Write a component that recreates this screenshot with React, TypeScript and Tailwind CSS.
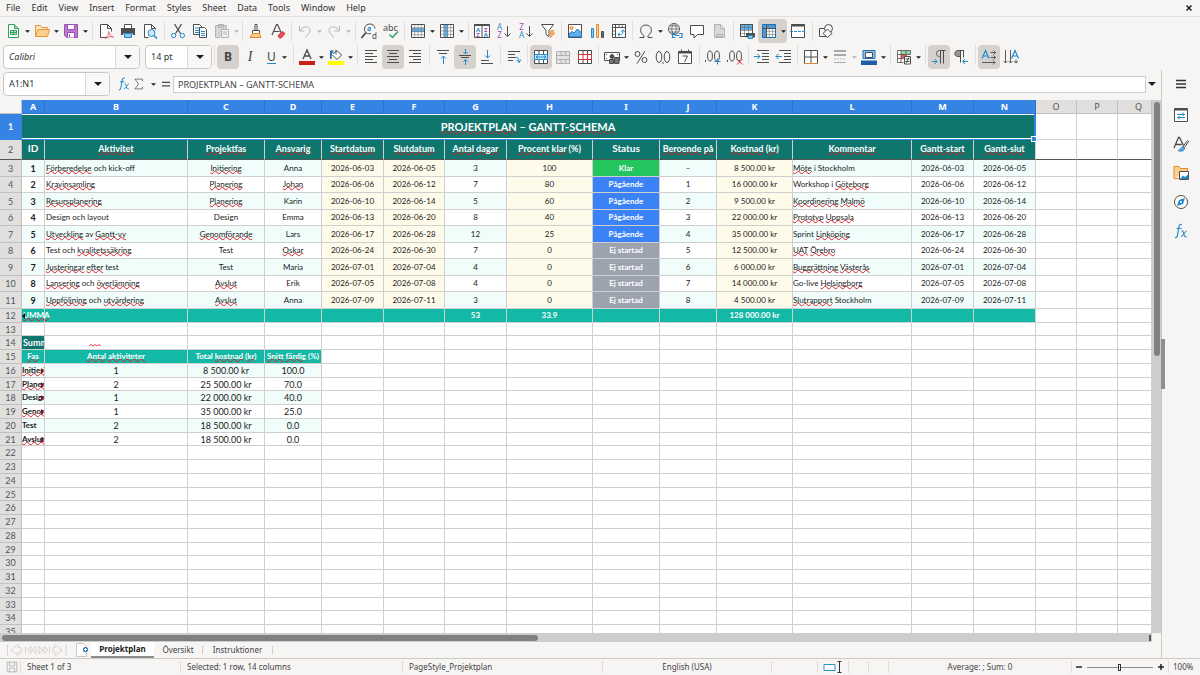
import type { ReactNode } from 'react';
import clsx from 'clsx';

const menus = ['File', 'Edit', 'View', 'Insert', 'Format', 'Styles', 'Sheet', 'Data', 'Tools', 'Window', 'Help'];

const Icon = ({ children, className }: { children: ReactNode; className?: string }) => (
  <svg viewBox="0 0 16 16" fill="none" stroke="#4d4d4d" className={clsx('shrink-0 overflow-visible', className ?? 'size-4')} aria-hidden="true">
    {children}
  </svg>
);

const Caret = ({ disabled, large }: { disabled?: boolean; large?: boolean }) => (
  <svg viewBox="0 0 8 4" fill={disabled ? '#b5b5b5' : '#1d1d1d'} className={large ? 'w-2 h-1' : 'w-[5px] h-[3px]'} aria-hidden="true">
    <path d="M0 0h8L4 4z" />
  </svg>
);

const icons: Record<string, ReactNode> = {
  new: (
    <>
      <path d="M3.5 1.5h6l4 4v9h-10z" stroke="#2fa35a" fill="#fff" />
      <path d="M9.5 1.5v4h4" stroke="#2fa35a" fill="#8fd6a6" />
      <path d="M5.5 7.5h6v4h-6z M5.5 9.5h6M8.5 7.5v4" stroke="#2fa35a" fill="#bfe8cb" />
    </>
  ),
  open: (
    <>
      <path d="M1.5 13.5v-11h5l1.500 2h5.500v3" stroke="#e8973c" fill="#fce3bd" />
      <path d="M1.500 13.500l2.500-7h11.500l-2 7z" stroke="#e8973c" fill="#fbd08e" />
    </>
  ),
  save: (
    <>
      <path d="M1.500 1.500h13v13h-11l-2-2z" stroke="#9b4fb0" fill="#b97acb" />
      <path d="M4.500 1.500h7v5h-7z" stroke="#9b4fb0" fill="#fff" />
      <path d="M4.500 14.500v-5h7v5" stroke="#9b4fb0" fill="#fff" />
      <path d="M6.500 11v3" stroke="#9b4fb0" />
    </>
  ),
  pdf: (
    <>
      <path d="M9.500 14.500h-7v-13h7l4 4v3M9.500 1.500v4h4" fill="#fff" />
      <path d="M7 15.500c2.500-2 4-4.500 3.700-7 .5 3 2.300 5 4.800 5.500-3-.6-5.500-.3-8.500 1.500" stroke="#e0526c" strokeWidth=".9" />
    </>
  ),
  print: (
    <>
      <path d="M4.500 5v-3.500h7v3.500" fill="#fff" />
      <path d="M1 5h14v6.500h-2v-2h-10v2h-2z" fill="#4d4d4d" stroke="none" />
      <path d="M1 11.500h2v-2h10v2h2" />
      <path d="M4.500 10.500h7v4h-7z" stroke="#1e8bcd" fill="#8ec5ee" />
    </>
  ),
  preview: (
    <>
      <path d="M6.500 14.500h-4v-13h7l4 4v1M9.500 1.500v4h4" fill="#fff" />
      <circle cx="9.500" cy="10" r="3.500" stroke="#1e8bcd" fill="#cfe6f7" />
      <path d="M12 12.500l3 3" stroke="#1e8bcd" strokeWidth="1.500" />
    </>
  ),
  cut: (
    <>
      <path d="M4.500 1l6 9.500M11.500 1l-6 9.500" strokeWidth="1.300" />
      <circle cx="3.700" cy="12.500" r="2.200" stroke="#1e8bcd" />
      <circle cx="12.300" cy="12.500" r="2.200" stroke="#1e8bcd" />
    </>
  ),
  copy: (
    <>
      <path d="M1.500 1.500h6l2 2v8h-8z" fill="#fff" />
      <path d="M3 5h5M3 7.500h4M3 9.500h4" stroke="#1e8bcd" />
      <path d="M7.500 4.500h5l2 2v8h-7z" fill="#fff" />
      <path d="M9 8.500h4M9 10.500h4M9 12.500h4" stroke="#1e8bcd" />
    </>
  ),
  paste: (
    <>
      <path d="M6 14.500h-4.500v-12h11v3M4.500 1.500h5v3h-5z" stroke="#b3b3b3" fill="#d6d6d6" />
      <path d="M7.500 6.500h7v8h-7zM9 9h4M9 11h4" stroke="#b3b3b3" fill="#f2f2f2" />
    </>
  ),
  clone: (
    <>
      <path d="M7 7v-5.500h2v5.500M4.500 7.500h7v3h-7z" fill="#fff" />
      <path d="M4.500 10.500h7l1.500 4h-11z" stroke="#e8872f" fill="#fbd08e" />
    </>
  ),
  clear: (
    <>
      <path d="M2 12l4.500-10.500h1l4 9M3.500 8.500h6" strokeWidth="1.200" />
      <path d="M8 12.500l4.500-4 2.500 2-4 4.500h-1.500z" stroke="#d9303e" fill="#e8505b" />
    </>
  ),
  undo: <path d="M2.500 3v5h5M3 7.500c3-5 10-4.500 10-.5 0 3-2.500 5-5 7.500" stroke="#b5b5b5" />,
  redo: <path d="M13.500 3v5h-5M13 7.500c-3-5-10-4.500-10-.5 0 3 2.500 5 5 7.500" stroke="#b5b5b5" />,
  find: (
    <>
      <path d="M10 10.500c-3.500 1-6.500-1-6.500-4.500s3-5 5.500-5 5 2 5 4.500" />
      <path d="M5 9.500l-4.500 5.500" strokeWidth="1.800" />
      <text x="6" y="8" fontSize="7" fontWeight="700" fill="#1e8bcd" stroke="none">a</text>
      <text x="11" y="15.500" fontSize="8" fill="#4d4d4d" stroke="none">d</text>
    </>
  ),
  spell: (
    <>
      <text x="0" y="7.500" fontSize="9" fill="#4d4d4d" stroke="none">abc</text>
      <path d="M6.500 11.500l3 3 5.500-6" stroke="#2fa35a" strokeWidth="1.400" />
    </>
  ),
  row: (
    <>
      <path d="M1.500 1.500h13v13h-13z" fill="#fff" stroke="none" />
      <path d="M1.500 5h13v4h-13z" fill="#63b1ea" stroke="none" />
      <path d="M4.700 1.500v13M8 1.500v13M11.300 1.500v13M1.500 4.700h13M1.500 8.700h13M1.500 11.700h13" stroke="#777" strokeWidth=".6" />
      <path d="M1.500 1.500h13v13h-13z" />
    </>
  ),
  col: (
    <>
      <path d="M1.500 1.500h13v13h-13z" fill="#fff" stroke="none" />
      <path d="M5 1.500h4v13h-4z" fill="#63b1ea" stroke="none" />
      <path d="M4.700 1.500v13M8.700 1.500v13M11.700 1.500v13M1.500 4.700h13M1.500 8h13M1.500 11.300h13" stroke="#777" strokeWidth=".6" />
      <path d="M1.500 1.500h13v13h-13z" />
    </>
  ),
  sort: (
    <>
      <path d="M.5 1.500h15v13h-15zM8 3v11" fill="#fff" />
      <path d="M.5 2h15" strokeWidth="2" />
      <g fontSize="6" fontWeight="700" stroke="none">
        <text x="2" y="8.500" fill="#1e8bcd">A</text>
        <text x="2.200" y="14" fill="#a44cb8">Z</text>
        <text x="10" y="8.500" fill="#a44cb8">Z</text>
        <text x="9.700" y="14" fill="#1e8bcd">A</text>
      </g>
    </>
  ),
  asc: (
    <>
      <text x="1" y="7" fontSize="8" fill="#1e8bcd" stroke="none">A</text>
      <text x="1.300" y="15" fontSize="8" fill="#a44cb8" stroke="none">Z</text>
      <path d="M11.500 3v10M8.500 10.500l3 3 3-3" />
    </>
  ),
  desc: (
    <>
      <text x="1.300" y="7" fontSize="8" fill="#a44cb8" stroke="none">Z</text>
      <text x="1" y="15" fontSize="8" fill="#1e8bcd" stroke="none">A</text>
      <path d="M11.500 3v10M8.500 10.500l3 3 3-3" />
    </>
  ),
  filter: (
    <>
      <path d="M1.500 1.500h12l-4.500 6v6l-3-2v-4z" fill="#fff" />
      <path d="M11 7.500h3l-1 2.500h2l-5 5 1.200-4h-1.700z" stroke="#e8872f" fill="#fbb45c" strokeWidth=".6" />
    </>
  ),
  image: (
    <>
      <path d="M1.500 1.500h13v13h-13z" fill="#fff" />
      <circle cx="4.500" cy="5" r="1.500" stroke="#e8872f" fill="#fbd08e" />
      <path d="M2 14v-3l3-2.500 2 1.500 3.500-4 4 4v4z" fill="#63b1ea" stroke="#1e6fb5" />
    </>
  ),
  chart: (
    <>
      <path d="M2.500 5.500h2v9h-2z" stroke="#1e8bcd" fill="#8ec5ee" />
      <path d="M7.500 1.500h2v13h-2z" stroke="#e8872f" fill="#fbd08e" />
      <path d="M12.500 8.500h2v6h-2z" fill="#6b6b6b" />
    </>
  ),
  pivot: (
    <>
      <path d="M1.500 1.500h13v13h-13z" fill="#fff" />
      <path d="M1.500 4.500h13M4.500 1.500v13" />
      <path d="M8 1.500v3M11.300 1.500v3M1.500 8h3M1.500 11.300h3" strokeWidth=".7" />
      <path d="M7 11.500h2.500c2 0 2.500-1.500 2.500-4.500M10.300 8.700l1.700-1.900 1.700 1.900M8.700 9.800l-1.900 1.700 1.900 1.700" stroke="#1e8bcd" />
    </>
  ),
  omega: <path d="M1.500 14.500h4.500v-2c-5-2.500-4.500-10.500 2-10.500s7 8 2 10.500v2h4.500" />,
  link: (
    <>
      <circle cx="7" cy="6" r="5.500" strokeWidth=".9" />
      <path d="M1.500 6h11M7 .5c-3 3-3 8 0 11M7 .5c3 3 3 8 0 11M2.500 3h9M2.500 9h9" strokeWidth=".7" />
      <path d="M8.500 10.500h-3v4h3M12 10.500h3v4h-3M8 12.500h4.500" stroke="#1e8bcd" strokeWidth="1.200" />
    </>
  ),
  comment: <path d="M1.500 2.500h13v9h-6l-3.500 3.500v-3.500h-3.500z" fill="#fff" />,
  headfoot: (
    <path d="M3.500 1.500h6l4 4v9h-10zM9.500 1.500v4h4M5.500 11.500h6v2h-6z" stroke="#b3b3b3" fill="#d9d9d9" />
  ),
  printarea: (
    <>
      <path d="M1.500 1.500h12v12h-12z" fill="#fff" />
      <path d="M1.500 1.500h12v5.500h-12z" fill="#63b1ea" stroke="none" />
      <path d="M1.500 4.500h12M1.500 7.500h12M1.500 10.500h12M5.500 1.500v12M9.500 1.500v12" strokeWidth=".6" stroke="#666" />
      <path d="M1.500 1.500h12v12h-12z" />
      <path d="M7.500 10.500h8v3.500h-8z" fill="#4d4d4d" />
      <path d="M9.500 12.500h4v3h-4z" fill="#8ec5ee" stroke="#1e8bcd" />
    </>
  ),
  freeze: (
    <>
      <path d="M1.500 1.500h13v13h-13z" fill="#fff" />
      <path d="M1 1h14v4h-10v10h-4z" fill="#4aa0e0" stroke="none" />
      <path d="M8.300 5v9.500M11.500 5v9.500M5 8.300h9.500M5 11.500h9.500M3.300 5v9.500M5 3.300h9.500" stroke="#777" strokeWidth=".6" />
      <path d="M1.500 1.500h13v13h-13z" stroke="#1e6fb5" />
      <path d="M5.500 1.500v13M1.500 5.500h13" />
    </>
  ),
  split: (
    <>
      <path d="M1.500 1.500h13v13h-13z" fill="#fff" />
      <path d="M1.500 2.500h13" strokeWidth="2" />
      <path d="M0 8.500h16" stroke="#1e8bcd" strokeDasharray="3 1" />
    </>
  ),
  shapes: (
    <>
      <path d="M1.500 5.500h7v8h-7z" />
      <circle cx="10.500" cy="5.500" r="4" fill="#f6f5f4" />
      <path d="M9.500 6l4.500 4.500-4.500 4-4.500-4z" fill="#f6f5f4" />
    </>
  ),
  fontcolor: (
    <>
      <path d="M4 10l4-9 4 9M5.500 7h5" strokeWidth="1.400" />
      <path d="M0 12h16v4h-16z" fill="#c9211e" stroke="none" />
    </>
  ),
  highlight: (
    <>
      <path d="M5 5l4-3.500 4.500 4.500-4.500 4.500-4.500-4.500M8 1v4.500" fill="#fff" />
      <path d="M2 1.500h4l-2 3-.5 5.500h-1.500z" fill="#1e6fb5" stroke="none" />
      <path d="M0 12h16v4h-16z" fill="#ffff00" stroke="none" />
    </>
  ),
  left: <path d="M2 1.500h12M2 4.500h8M2 7.500h12M2 10.500h8M2 13.500h12" />,
  center: <path d="M2 1.500h12M4 4.500h8M2 7.500h12M4 10.500h8M2 13.500h12" />,
  right: <path d="M2 1.500h12M6 4.500h8M2 7.500h12M6 10.500h8M2 13.500h12" />,
  top: (
    <>
      <path d="M2 1.500h12M4 4.500h8" />
      <path d="M8.500 15v-8M6 9.500l2.500-2.500 2.500 2.500" stroke="#1e8bcd" />
    </>
  ),
  middle: (
    <>
      <path d="M2 6.500h12M4 8.500h8" />
      <path d="M8.500 0v5M6.500 3l2 2 2-2M8.500 16v-5.500M6.500 12.500l2-2 2 2" stroke="#1e8bcd" />
    </>
  ),
  bottom: (
    <>
      <path d="M2 11.500h8M2 14.500h12" />
      <path d="M8.500 1v8M6 6.500l2.500 2.500 2.500-2.500" stroke="#1e8bcd" />
    </>
  ),
  wrap: (
    <>
      <path d="M2 2.500h12M2 5.500h7M2 8.500h7M2 11.500h5" />
      <path d="M9 8.500c3-.5 4 1 4 5M10.500 11l2.500 2.500 2-3" stroke="#1e8bcd" />
    </>
  ),
  merge: (
    <>
      <path d="M1.500 1.500h13v13h-13z" fill="#fff" />
      <path d="M6 1.500v4M10.500 1.500v4M6 10.500v4M10.500 10.500v4" />
      <path d="M1.500 5.500h13v5h-13z" stroke="#1e8bcd" fill="#cfe6f7" />
      <path d="M3 8h10M5 6.500l-2 1.500 2 1.500M11 6.500l2 1.500-2 1.500" stroke="#1e8bcd" />
    </>
  ),
  mergecells: <path d="M1.500 2.500h13v12h-13zM1.500 6.500h13M1.500 10.500h13M6 2.500v4M10.500 2.500v4M6 10.500v4M10.500 10.500v4" stroke="#b0b0b0" fill="#e4e4e4" />,
  unmerge: (
    <>
      <path d="M1.500 1.500h13v13h-13z" fill="#fff" />
      <path d="M6 1.500v4M10.500 1.500v4M6 10.500v4M10.500 10.500v4" />
      <path d="M1.500 5.500h13v5h-13zM6 5.500v5M10.500 5.500v5" stroke="#d9303e" />
    </>
  ),
  currency: (
    <>
      <path d="M.5 3.500h15v8h-15z" fill="#fff" />
      <circle cx="8" cy="7.500" r="2" fill="#4d4d4d" />
      <path d="M2 5.500h1M13 5.500h1M2 9.500h1" />
      <path d="M5.500 10.500h4v4h-4zM10.500 8.500h4.500v6h-4.500z" fill="#777" />
    </>
  ),
  percent: (
    <>
      <circle cx="4.500" cy="5" r="2.500" />
      <circle cx="11.500" cy="11" r="2.500" />
      <path d="M12 2l-8 12.500" />
    </>
  ),
  number: (
    <>
      <ellipse cx="4" cy="8" rx="2.800" ry="5.500" />
      <ellipse cx="12" cy="8" rx="2.800" ry="5.500" />
      <path d="M8 13v2" />
    </>
  ),
  date: (
    <>
      <path d="M1.500 2.500h13v12h-13z" fill="#fff" />
      <path d="M4.500 .5v3M11.500 .5v3" />
      <path d="M1.500 3.500h13" strokeWidth="2" />
      <path d="M5.500 7h5l-3 6" />
    </>
  ),
  adddec: (
    <>
      <ellipse cx="5" cy="7" rx="2.400" ry="5" />
      <ellipse cx="12" cy="7" rx="2.400" ry="5" />
      <path d="M.5 11v2" />
      <path d="M12.500 9.500v6M9.500 12.500h6" stroke="#1e8bcd" />
    </>
  ),
  deldec: (
    <>
      <ellipse cx="5" cy="7" rx="2.400" ry="5" />
      <ellipse cx="12" cy="7" rx="2.400" ry="5" />
      <path d="M.5 11v2" />
      <path d="M10 10l5.500 5.500M15.500 10l-5.500 5.500" stroke="#d9303e" />
    </>
  ),
  indent: (
    <>
      <path d="M3 1.500h12M8 4.500h7M8 7.500h7M8 10.500h7M3 13.500h12" />
      <path d="M0 7.500h6M3.500 5l2.500 2.500-2.500 2.500" stroke="#1e8bcd" />
    </>
  ),
  outdent: (
    <>
      <path d="M3 1.500h12M8 4.500h7M8 7.500h7M8 10.500h7M3 13.500h12" />
      <path d="M0 7.500h6M2.500 5l-2.500 2.500 2.500 2.500" stroke="#1e8bcd" />
    </>
  ),
  borders: (
    <>
      <path d="M1.500 1.500h13v13h-13z" fill="#fff" />
      <path d="M1.500 14.500h13" stroke="#e8872f" />
      <path d="M8 2v12M2 8h12" />
    </>
  ),
  borderstyle: (
    <>
      <path d="M2 2h12M2 6h12" stroke="#a8a8a8" strokeWidth="2" />
      <path d="M2 10h12" stroke="#b5b5b5" strokeDasharray="2 1" />
      <path d="M2 13.500h12" stroke="#a8a8a8" />
    </>
  ),
  bordercolor: (
    <>
      <path d="M2 1.500h12v8h-12z" stroke="#1e6fb5" fill="#8ec5ee" />
      <path d="M4.500 3.500h7v5h-7z" stroke="#4d4d4d" fill="#fff" />
      <path d="M0 11.500h16v4.500h-16z" fill="#1e5fa8" stroke="none" />
    </>
  ),
  cond: (
    <>
      <path d="M1.500 1.500h13v12h-13z" fill="#fff" stroke="none" />
      <path d="M5 1.500h9v4h-9z" fill="#8fd6a6" stroke="none" />
      <path d="M5 5.500h6v4h-6z" fill="#e8505b" stroke="none" />
      <path d="M1.500 1.500h13v4h-13zM1.500 5.500v8h6M1.500 9.500h6M5 1.500v12M10 1.500v4" strokeWidth=".8" />
      <path d="M8.500 7.500h6v7.500h-6z" fill="#fff" />
      <path d="M9.500 10h4M9.500 12.500h4M13 8.500l-3 5.500" />
    </>
  ),
  ltr: (
    <>
      <path d="M14.500 1.500h-6c-4 0-4 6 0 6M9.500 1.500v13M12.500 1.500v13" />
      <path d="M1 12.500h5M3.500 10l2.500 2.500-2.500 2.500" stroke="#1e8bcd" />
    </>
  ),
  rtl: (
    <>
      <path d="M7.500 1.500h-2c-5 0-5 6 0 6h2z" fill="#999" />
      <path d="M11 1.500h-5M7.500 1.500v12M10.500 1.500v7" />
      <path d="M10 12.500h5M12 10l-2.500 2.500 2.500 2.500" stroke="#1e8bcd" />
    </>
  ),
  textlr: (
    <>
      <path d="M1 9.500l3.500-8 3.500 8M2.300 7h4.500" stroke="#1e8bcd" strokeWidth="1.200" />
      <path d="M9.500 3.500h5M12.500 1.500l2 2-2 2M9.500 8.500h5M12.500 6.500l2 2-2 2M1 13.500h13M12 11.500l2 2-2 2" strokeWidth=".9" />
    </>
  ),
  texttb: (
    <>
      <path d="M8.500 9.500l3.500-8 3.500 8M9.800 7h4.500" stroke="#1e8bcd" strokeWidth="1.200" />
      <path d="M2.500 1v13M.5 12l2 2 2-2M7.500 1v13M5.500 12l2 2 2-2M13 10.500v3.500M11 12l2 2 2-2" strokeWidth=".9" />
    </>
  ),
  props: (
    <>
      <path d="M1.500 1.500h13v13h-13z" fill="#fff" />
      <path d="M1.500 2.500h13" strokeWidth="2" />
      <path d="M4 7.500h8M10 5.500v3.500M4 10.500h8M6 9v3.500" stroke="#1e8bcd" />
    </>
  ),
  styles: (
    <>
      <path d="M1 12l4.500-10.500h1l4 8M2.800 8.500h6" strokeWidth="1.300" />
      <path d="M10 10.500l4.500-6 1 1-4 6z" fill="#fff" />
      <path d="M5 14.500c3 0 2-3 4.500-3.500l2 1.500c-.5 3-4 3-6.500 2z" stroke="#1e8bcd" fill="#63b1ea" />
    </>
  ),
  gallery: (
    <>
      <path d="M1 13.500v-12h5l1.500 2h7v3M1 13.500h5" stroke="#e8872f" fill="#fbd08e" />
      <path d="M6.500 6.500h9v8h-9z" fill="#fff" />
      <path d="M7 14l3-3.500 2 1.500 3-2.500v4.500z" fill="#1e8bcd" stroke="none" />
    </>
  ),
  navigator: (
    <>
      <circle cx="8" cy="8" r="6.500" fill="#fff" />
      <path d="M12 4l-2 6-6 2 2-6z" fill="#1e8bcd" stroke="none" />
      <circle cx="8" cy="8" r="1" fill="#fff" stroke="none" />
    </>
  ),
  fx: (
    <>
      <path d="M9 1.500c-2-.8-2.800.3-3.200 3l-1.300 7.500c-.3 2-1 3-2.500 2.500M3.500 5.500h5" stroke="#1e8bcd" strokeWidth="1.200" />
      <path d="M8.500 8c1.500-.5 1.800.8 2.300 3s1.500 3 2.700 2.500M13.500 8c-1.500 0-3.500 5.500-5.500 5.500" stroke="#1e8bcd" strokeWidth="1.100" />
    </>
  ),
  sigma: <path d="M12.500 4v-2.500h-10l5 6.500-5 6.500h10v-2.500" />,
  equals: <path d="M1.500 5.500h13M1.500 11h13" strokeWidth="2" />,
};

type ToolItem = {
  icon: string;
  label: string;
  menu?: boolean;
  active?: boolean;
  disabled?: boolean;
} | 'sep' | 'wide';

const standardBar: ToolItem[] = [
  { icon: 'new', label: 'New', menu: true },
  { icon: 'open', label: 'Open', menu: true },
  { icon: 'save', label: 'Save', menu: true },
  'wide',
  { icon: 'pdf', label: 'Export as PDF' },
  { icon: 'print', label: 'Print' },
  { icon: 'preview', label: 'Print preview' },
  'wide',
  { icon: 'cut', label: 'Cut' },
  { icon: 'copy', label: 'Copy' },
  { icon: 'paste', label: 'Paste', menu: true, disabled: true },
  'sep',
  { icon: 'clone', label: 'Clone formatting' },
  { icon: 'clear', label: 'Clear formatting' },
  'sep',
  { icon: 'undo', label: 'Undo', menu: true, disabled: true },
  { icon: 'redo', label: 'Redo', menu: true, disabled: true },
  'wide',
  { icon: 'find', label: 'Find and replace' },
  { icon: 'spell', label: 'Spelling' },
  'sep',
  { icon: 'row', label: 'Row', menu: true },
  { icon: 'col', label: 'Column', menu: true },
  'wide',
  { icon: 'sort', label: 'Sort' },
  { icon: 'asc', label: 'Sort ascending' },
  { icon: 'desc', label: 'Sort descending' },
  { icon: 'filter', label: 'AutoFilter' },
  'sep',
  { icon: 'image', label: 'Insert image' },
  { icon: 'chart', label: 'Insert chart' },
  { icon: 'pivot', label: 'Pivot table' },
  'sep',
  { icon: 'omega', label: 'Special character', menu: true },
  { icon: 'link', label: 'Hyperlink' },
  { icon: 'comment', label: 'Comment' },
  { icon: 'headfoot', label: 'Headers and footers', disabled: true },
  'wide',
  { icon: 'printarea', label: 'Print area' },
  { icon: 'freeze', label: 'Freeze panes', menu: true, active: true },
  { icon: 'split', label: 'Split window' },
  'wide',
  { icon: 'shapes', label: 'Draw functions' },
];

const formattingBar: ToolItem[] = [
  { icon: 'fontcolor', label: 'Font color', menu: true },
  { icon: 'highlight', label: 'Highlighting', menu: true },
  'wide',
  { icon: 'left', label: 'Align left' },
  { icon: 'center', label: 'Center', active: true },
  { icon: 'right', label: 'Align right' },
  'wide',
  { icon: 'top', label: 'Align top' },
  { icon: 'middle', label: 'Center vertically', active: true },
  { icon: 'bottom', label: 'Align bottom' },
  'sep',
  { icon: 'wrap', label: 'Wrap text' },
  'sep',
  { icon: 'merge', label: 'Merge and center', active: true },
  { icon: 'mergecells', label: 'Merge cells', disabled: true },
  { icon: 'unmerge', label: 'Unmerge cells' },
  'sep',
  { icon: 'currency', label: 'Currency', menu: true },
  { icon: 'percent', label: 'Percent' },
  { icon: 'number', label: 'Number' },
  { icon: 'date', label: 'Date' },
  'wide',
  { icon: 'adddec', label: 'Add decimal place' },
  { icon: 'deldec', label: 'Delete decimal place' },
  'sep',
  { icon: 'indent', label: 'Increase indent' },
  { icon: 'outdent', label: 'Decrease indent' },
  'sep',
  { icon: 'borders', label: 'Borders', menu: true },
  { icon: 'borderstyle', label: 'Border style', menu: true, disabled: true },
  { icon: 'bordercolor', label: 'Border color', menu: true },
  'wide',
  { icon: 'cond', label: 'Conditional formatting', menu: true },
  'wide',
  { icon: 'ltr', label: 'Left-to-right', active: true },
  { icon: 'rtl', label: 'Right-to-left' },
  'wide',
  { icon: 'textlr', label: 'Text left to right', active: true },
  { icon: 'texttb', label: 'Text top to bottom' },
];

const Tools = ({ items }: { items: ToolItem[] }) => (
  <>
    {items.map((it, i) =>
      typeof it === 'string' ? (
        <span key={i} className={clsx('flex h-5 shrink-0 justify-center', it === 'wide' ? 'w-1.5' : 'w-[5px]')}>
          <span className="w-px bg-[#e3e1df]" />
        </span>
      ) : (
        <button
          key={i}
          type="button"
          aria-label={it.label}
          disabled={it.disabled}
          className={clsx('flex h-6 shrink-0 items-center rounded pl-[3px]', it.menu ? 'w-[29px] gap-1' : 'w-[22px]', it.active && 'bg-[#d5d1cd]')}
        >
          <Icon>{icons[it.icon]}</Icon>
          {it.menu && <Caret disabled={it.disabled} />}
        </button>
      ),
    )}
  </>
);

const Combo = ({ label, value, className, inputClass, arrowClass }: { label: string; value: string; className: string; inputClass?: string; arrowClass: string }) => (
  <div className={clsx('flex h-6 shrink-0 overflow-hidden rounded border border-[#cdc7c2] bg-white', className)}>
    <input aria-label={label} defaultValue={value} className={clsx('min-w-0 flex-1 px-[5px] text-[9px] text-[#2e3436] outline-none', inputClass)} />
    <button type="button" aria-label={`${label} list`} className={clsx('flex items-center justify-center border-l border-[#dcd9d6] bg-[#f9f8f8]', arrowClass)}>
      <Caret large />
    </button>
  </div>
);

// Words wrapped in ~ ~ carry the red spell-check underline.
const Words = ({ text }: { text: string }) => (
  <>
    {text.split('~').map((part, i) =>
      i % 2 ? (
        <span key={i} className="underline decoration-[#e01b24] decoration-wavy decoration-1 -underline-offset-1 [text-decoration-skip-ink:none]">
          {part}
        </span>
      ) : (
        part
      ),
    )}
  </>
);

const columns = [
  { name: 'A', w: 'w-[23px]' },
  { name: 'B', w: 'w-[143px]' },
  { name: 'C', w: 'w-[77px]' },
  { name: 'D', w: 'w-[57px]' },
  { name: 'E', w: 'w-[62px]' },
  { name: 'F', w: 'w-[61px]' },
  { name: 'G', w: 'w-[62px]' },
  { name: 'H', w: 'w-[86px]' },
  { name: 'I', w: 'w-[67px]' },
  { name: 'J', w: 'w-[57px]' },
  { name: 'K', w: 'w-[76px]' },
  { name: 'L', w: 'w-[119px]' },
  { name: 'M', w: 'w-[62px]' },
  { name: 'N', w: 'w-[62px]' },
  { name: 'O', w: 'w-[41px]' },
  { name: 'P', w: 'w-[41px]' },
  { name: 'Q', w: 'w-auto' },
];

const headers = ['ID', '~Aktivitet~', '~Projektfas~', '~Ansvarig~', '~Startdatum~', '~Slutdatum~', '~Antal~ ~dagar~', '~Procent~ ~klar~ (%)', 'Status', '~Beroende~ ~på~', '~Kostnad~ (~kr~)', '~Kommentar~', '~Gantt-start~', '~Gantt-slut~'];

const tasks = [
  ['~Förberedelse~ och kick-off', '~Initiering~', 'Anna', '2026-06-03', '2026-06-05', '3', '100', 'Klar', '–', '8 500.00 kr', '~Möte~ i Stockholm'],
  ['~Kravinsamling~', '~Planering~', '~Johan~', '2026-06-06', '2026-06-12', '7', '80', 'Pågående', '1', '16 000.00 kr', 'Workshop i ~Göteborg~'],
  ['~Resursplanering~', '~Planering~', 'Karin', '2026-06-10', '2026-06-14', '5', '60', 'Pågående', '2', '9 500.00 kr', '~Koordinering~ ~Malmö~'],
  ['Design och layout', 'Design', 'Emma', '2026-06-13', '2026-06-20', '8', '40', 'Pågående', '3', '22 000.00 kr', '~Prototyp~ ~Uppsala~'],
  ['~Utveckling~ av ~Gantt-vy~', '~Genomförande~', 'Lars', '2026-06-17', '2026-06-28', '12', '25', 'Pågående', '4', '35 000.00 kr', 'Sprint ~Linköping~'],
  ['Test och ~kvalitetssäkring~', 'Test', '~Oskar~', '2026-06-24', '2026-06-30', '7', '0', 'Ej startad', '5', '12 500.00 kr', '~UAT~ ~Örebro~'],
  ['~Justeringar~ ~efter~ test', 'Test', 'Maria', '2026-07-01', '2026-07-04', '4', '0', 'Ej startad', '6', '6 000.00 kr', '~Buggrättning~ ~Västerås~'],
  ['~Lansering~ och ~överlämning~', '~Avslut~', 'Erik', '2026-07-05', '2026-07-08', '4', '0', 'Ej startad', '7', '14 000.00 kr', 'Go-live ~Helsingborg~'],
  ['~Uppföljning~ och ~utvärdering~', '~Avslut~', 'Anna', '2026-07-09', '2026-07-11', '3', '0', 'Ej startad', '8', '4 500.00 kr', '~Slutrapport~ Stockholm'],
];

const phases = [
  ['~Initiering~', '1', '8 500.00 kr', '100.0'],
  ['~Planering~', '2', '25 500.00 kr', '70.0'],
  ['Design', '1', '22 000.00 kr', '40.0'],
  ['~Genomförande~', '1', '35 000.00 kr', '25.0'],
  ['Test', '2', '18 500.00 kr', '0.0'],
  ['~Avslut~', '2', '18 500.00 kr', '0.0'],
];

const statusColors: Record<string, string> = {
  Klar: 'bg-[#22c55e]',
  Pågående: 'bg-[#3b82f6]',
  'Ej startad': 'bg-[#9ca3af]',
};

const line = 'border-b border-r border-[#cfcfcf]';

const RowHead = ({ n, active, edge }: { n: number; active?: boolean; edge?: string }) => (
  <th
    scope="row"
    className={clsx('border-b border-r p-0 text-center text-[9px]', active ? 'border-[#3584e4] bg-[#3584e4] font-bold text-white' : 'border-[#c3c1bf] bg-[#e1dfdd] font-normal text-[#555]', edge)}
  >
    {n}
  </th>
);

const Blank = ({ from, edge }: { from: number; edge?: string }) => (
  <>
    {columns.slice(from).map((c) => (
      <td key={c.name} className={clsx('p-0', line, edge)} />
    ))}
  </>
);

const Overflow = () => (
  <svg viewBox="0 0 3 6" fill="#8a0f1c" className="absolute right-0 top-1 h-1.5 w-[3px]" aria-hidden="true">
    <path d="M0 0v6l3-3z" />
  </svg>
);

const TaskRow = ({ task, index }: { task: string[]; index: number }) => {
  const [name, phase, owner, start, end, days, done, status, dep, cost, note] = task;
  const stripe = index % 2 === 0 ? 'bg-[#f0fdfa]' : 'bg-white';
  const cell = clsx('overflow-hidden whitespace-nowrap p-0 text-center', line);
  return (
    <tr className={index % 2 === 0 ? 'h-[17px]' : 'h-4'}>
      <RowHead n={index + 3} />
      <td className={clsx(cell, stripe, 'text-[9px] font-bold')}>{index + 1}</td>
      <td className={clsx(cell, stripe, 'pl-px text-left')}><Words text={name} /></td>
      <td className={clsx(cell, stripe)}><Words text={phase} /></td>
      <td className={clsx(cell, stripe)}><Words text={owner} /></td>
      <td className={clsx(cell, 'bg-[#fffbeb]')}>{start}</td>
      <td className={clsx(cell, 'bg-[#fffbeb]')}>{end}</td>
      <td className={clsx(cell, stripe)}>{days}</td>
      <td className={clsx(cell, 'bg-[#fffbeb]')}>{done}</td>
      <td className={clsx(cell, statusColors[status], 'font-bold text-white')}>{status}</td>
      <td className={clsx(cell, stripe)}>{dep}</td>
      <td className={clsx(cell, 'bg-[#fffbeb]')}>{cost}</td>
      <td className={clsx(cell, stripe, 'text-left')}><Words text={note} /></td>
      <td className={clsx(cell, stripe)}>{start}</td>
      <td className={clsx(cell, stripe)}>{end}</td>
      <Blank from={14} />
    </tr>
  );
};

const Sheet = () => {
  const totals = ['', '', '', '', '', '53', '33.9', '', '', '128 000.00 kr', '', '', ''];
  const emptyRows = Array.from({ length: 44 }, (_, i) => i + 22);
  const rowHeight = (n: number) => ((n - 13) % 4 === 0 ? 'h-[13px]' : 'h-3.5');

  return (
    <table className="w-full table-fixed border-separate border-spacing-0 bg-white font-['Lato','Noto_Sans',sans-serif] text-[8px] leading-[11px] text-[#1a1a1a]">
      <colgroup>
        <col className="w-[22px]" />
        {columns.map((c) => <col key={c.name} className={c.w} />)}
      </colgroup>
      <thead className="font-['Noto_Sans',sans-serif]">
        <tr className="h-3.5">
          <td className="border-b border-r border-[#c3c1bf] bg-[#f6f5f4] p-0" />
          {columns.map((c, i) => (
            <th
              key={c.name}
              scope="col"
              className={clsx(
                'border-b border-r p-0 text-center text-[9px]',
                i < 14 ? 'border-[#2a74cf] bg-[#3584e4] font-bold text-white' : 'border-[#c3c1bf] bg-[#e1dfdd] font-normal text-[#555]',
                c.name === 'Q' && 'pl-2',
              )}
            >
              {c.name}
            </th>
          ))}
        </tr>
      </thead>
      <tbody>
        <tr className="h-[26px]">
          <RowHead n={1} active />
          <td colSpan={14} className="relative border-b border-r-2 border-[#3584e4] bg-[#0f766e] p-0 text-center text-[11px] font-bold text-white shadow-[inset_0_1px_0_#fff,inset_0_-1px_0_#fff]">
            <Words text="~PROJEKTPLAN~ – ~GANTT-SCHEMA~" />
            <span className="absolute -bottom-0.5 -right-0.5 size-1 bg-[#3584e4] ring-1 ring-white" />
          </td>
          <Blank from={14} />
        </tr>
        <tr className="h-5">
          <RowHead n={2} edge="border-b-[#555]" />
          {headers.map((h) => (
            <td
              key={h}
              className={clsx('overflow-hidden whitespace-nowrap border-b border-r border-b-[#555] border-r-[#cfcfcf] bg-[#0f766e] p-0 pb-0.5 text-center font-bold text-white', h === 'ID' || h === 'Status' ? 'text-[10px]' : 'text-[9px]')}
            >
              <Words text={h} />
            </td>
          ))}
          <Blank from={14} edge="border-b-[#555]" />
        </tr>
        {tasks.map((t, i) => <TaskRow key={t[0]} task={t} index={i} />)}
        <tr className="h-3.5">
          <RowHead n={12} />
          <td className={clsx('relative whitespace-nowrap bg-[#14b8a6] p-0 pl-px font-bold text-white', line)}>
            <svg viewBox="0 0 3 6" fill="#111" className="absolute left-0 top-1 h-1.5 w-[3px]" aria-hidden="true">
              <path d="M3 0v6l-3-3z" />
            </svg>
            <Words text="~UMMA~" />
          </td>
          {totals.map((t, i) => (
            <td key={i} className={clsx('bg-[#14b8a6] p-0 text-center font-bold text-white', line)}>{t}</td>
          ))}
          <Blank from={14} />
        </tr>
        <tr className="h-[13px]">
          <RowHead n={13} />
          <Blank from={0} />
        </tr>
        <tr className="h-3.5">
          <RowHead n={14} />
          <td className={clsx('overflow-hidden whitespace-nowrap bg-[#0f766e] p-0 pl-px text-[9px] font-bold text-white', line)}>Summ</td>
          <td className={clsx('p-0 pl-11', line)}>
            <svg viewBox="0 0 12 3" fill="none" stroke="#e01b24" className="mt-1.5 h-[3px] w-3" aria-hidden="true">
              <path d="M0 2l2-1.500 2 1.500 2-1.500 2 1.500 2-1.500 2 1.500" strokeWidth=".8" />
            </svg>
          </td>
          <Blank from={2} />
        </tr>
        <tr className="h-3.5">
          <RowHead n={15} />
          {['~Fas~', '~Antal~ ~aktiviteter~', 'Total ~kostnad~ (~kr~)', '~Snitt~ ~färdig~ (%)'].map((t) => (
            <td key={t} className={clsx('overflow-hidden whitespace-nowrap bg-[#14b8a6] p-0 text-center font-bold text-white', line)}>
              <Words text={t} />
            </td>
          ))}
          <Blank from={4} />
        </tr>
        {phases.map(([name, ...values], i) => (
          <tr key={name} className={rowHeight(i + 16)}>
            <RowHead n={i + 16} />
            <td className={clsx('relative overflow-hidden whitespace-nowrap p-0 font-bold', line, i % 2 === 0 && 'bg-[#f0fdfa]')}>
              <Words text={name} />
              {name !== 'Test' && <Overflow />}
            </td>
            {values.map((v, j) => (
              <td key={j} className={clsx('p-0 text-center text-[9px]', line, i % 2 === 0 && 'bg-[#f0fdfa]')}>{v}</td>
            ))}
            <Blank from={4} />
          </tr>
        ))}
        {emptyRows.map((n) => (
          <tr key={n} className={rowHeight(n)}>
            <RowHead n={n} />
            <Blank from={0} />
          </tr>
        ))}
      </tbody>
    </table>
  );
};

const FormulaBar = () => (
  <div className="flex h-7 shrink-0 items-center pl-[3px]">
    <Combo label="Name box" value="A1:N1" className="w-[107px]" arrowClass="w-6" />
    <button type="button" aria-label="Function wizard" className="ml-1.5 flex w-4 justify-center">
      <Icon className="size-3.5">{icons.fx}</Icon>
    </button>
    <button type="button" aria-label="Select function" className="flex w-6 items-center justify-between pl-px">
      <Icon className="size-3">{icons.sigma}</Icon>
      <Caret />
    </button>
    <button type="button" aria-label="Formula" className="ml-0.5 flex w-[15px] justify-center">
      <Icon className="size-2.5">{icons.equals}</Icon>
    </button>
    <input
      aria-label="Input line"
      defaultValue="PROJEKTPLAN – GANTT-SCHEMA"
      className="h-[17px] min-w-0 flex-1 border border-[#d0ccc8] bg-white px-1 text-[9px] text-[#444] outline-none"
    />
    <button type="button" aria-label="Expand formula bar" className="flex w-[15px] shrink-0 pl-0.5">
      <Caret large />
    </button>
  </div>
);

const TabBar = () => (
  <div className="flex h-4 shrink-0 items-stretch text-[8px] text-[#444]">
    <svg viewBox="0 0 62 12" fill="none" stroke="#d6d3d0" className="ml-1.5 mt-0.5 h-3 w-[62px]" aria-hidden="true">
      <path d="M1.500 .5v11M12 .5l-7 5.500 7 5.500v-3h3v-5h-3zM19.500 2.500v7M25 2.500l-4 3.500 4 3.500zM30 2.500l-4 3.500 4 3.500zM33 2.500l4 3.500-4 3.500zM38 2.500l4 3.500-4 3.500zM43.500 2.500v7M49 .5l7 5.500-7 5.500v-3h-2v-5h2zM60 .5v11" />
    </svg>
    <button type="button" aria-label="Add sheet" className="ml-1 flex w-[19px] items-center justify-center">
      <svg viewBox="0 0 14 14" className="size-3.5" fill="#fff" stroke="#c9c6c3" aria-hidden="true">
        <path d="M1.500 .5h7l3 3v10h-10z" />
        <circle cx="10.500" cy="6.500" r="2.500" fill="#2a6fc0" stroke="none" />
        <path d="M10.500 5v3M9 6.500h3" stroke="#fff" />
      </svg>
    </button>
    <div role="tablist" className="flex">
      <button type="button" role="tab" aria-selected="true" className="w-[63px] border-b-2 border-[#8b8b8b] bg-white font-bold text-[#222]">Projektplan</button>
      <button type="button" role="tab" aria-selected="false" className="my-1 w-[49px] border-r border-[#d0ccc8] leading-2">Översikt</button>
      <button type="button" role="tab" aria-selected="false" className="my-1 w-[70px] border-r border-[#d0ccc8] leading-2">Instruktioner</button>
    </div>
  </div>
);

const StatusBar = () => {
  const field = 'flex h-3 items-center border-l border-[#dedbd8] whitespace-nowrap';
  return (
    <footer className="flex h-[17px] shrink-0 items-center border-t border-[#cdc9c5] text-[8px] text-[#444]">
      <span className="flex w-5 shrink-0 justify-center pl-1">
        <Icon className="size-3">
          <path d="M1.500 1.500h13v13h-13zM4.500 1.500v5h7v-5M4.500 14.500v-5h7v5" stroke="#a5a5a5" />
        </Icon>
      </span>
      <span className={clsx(field, 'flex-[153_1_0%] pl-1.5')}>Sheet 1 of 3</span>
      <span className={clsx(field, 'flex-[215_1_0%] pl-1.5')}>Selected: 1 row, 14 columns</span>
      <span className={clsx(field, 'flex-[193_1_0%] pl-1.5')}>PageStyle_Projektplan</span>
      <span className={clsx(field, 'flex-[168_1_0%] justify-center')}>English (USA)</span>
      <span className={clsx(field, 'w-[46px] shrink-0')} />
      <span className={clsx(field, 'w-[31px] shrink-0 justify-center')}>
        <svg viewBox="0 0 20 12" fill="none" className="h-3 w-5" aria-hidden="true">
          <path d="M1 3.500h11v6h-11z" stroke="#2f8fc9" fill="#fff" />
          <path d="M14.500 .5h4M16.500 .5v11M14.500 11.500h4" stroke="#333" />
        </svg>
      </span>
      <span className={clsx(field, 'w-5 shrink-0')} />
      <span className={clsx(field, 'w-5 shrink-0')} />
      <span className={clsx(field, 'flex-[182_1_0%] justify-center')}>Average: ; Sum: 0</span>
      <span className={clsx(field, 'w-[97px] shrink-0 justify-center gap-1')}>
        <button type="button" aria-label="Zoom out">
          <svg viewBox="0 0 8 8" className="size-2" stroke="#222" strokeWidth="1.500" aria-hidden="true"><path d="M1 4h6" /></svg>
        </button>
        <input
          type="range"
          aria-label="Zoom"
          defaultValue={49}
          className="h-2 w-[66px] appearance-none bg-transparent [&::-webkit-slider-runnable-track]:h-px [&::-webkit-slider-runnable-track]:bg-[#8d8d8d] [&::-webkit-slider-thumb]:-mt-[3px] [&::-webkit-slider-thumb]:h-[7px] [&::-webkit-slider-thumb]:w-[3px] [&::-webkit-slider-thumb]:appearance-none [&::-webkit-slider-thumb]:border [&::-webkit-slider-thumb]:border-[#333] [&::-webkit-slider-thumb]:bg-white"
        />
        <button type="button" aria-label="Zoom in">
          <svg viewBox="0 0 8 8" className="size-2" stroke="#222" strokeWidth="1.500" aria-hidden="true"><path d="M1 4h6M4 1v6" /></svg>
        </button>
      </span>
      <span className={clsx(field, 'w-8 shrink-0 pl-1')}>100%</span>
    </footer>
  );
};

const sidebarItems = [
  { icon: 'props', label: 'Properties' },
  { icon: 'styles', label: 'Styles' },
  { icon: 'gallery', label: 'Gallery' },
  { icon: 'navigator', label: 'Navigator' },
  { icon: 'fx', label: 'Functions' },
];

const App = () => (
  <div className="flex h-screen flex-col overflow-hidden bg-[#f6f5f4] font-['Noto_Sans',sans-serif] text-[#2e3436]">
    <header className="flex h-[17px] shrink-0 items-center justify-between border-b border-[#e3e1df] pl-px pr-2">
      <nav className="flex gap-px text-[9px] text-[#333]">
        {menus.map((m) => (
          <button key={m} type="button" className="px-[5px]">{m}</button>
        ))}
      </nav>
      <button type="button" aria-label="Close document">
        <svg viewBox="0 0 6 6" className="size-1.5" stroke="#222" strokeWidth="1.500" aria-hidden="true"><path d="M.5 .5l5 5M5.500 .5l-5 5" /></svg>
      </button>
    </header>

    <div role="toolbar" aria-label="Standard" className="flex h-7 shrink-0 items-center pl-0.5">
      <Tools items={standardBar} />
    </div>

    <div role="toolbar" aria-label="Formatting" className="flex h-[25px] shrink-0 items-start pl-[3px]">
      <Combo label="Font name" value="Calibri" className="w-[137px]" inputClass="italic" arrowClass="w-6" />
      <Combo label="Font size" value="14 pt" className="ml-[5px] w-[67px]" arrowClass="w-6" />
      <span className="flex h-5 w-[5px] shrink-0 justify-center"><span className="w-px bg-[#e3e1df]" /></span>
      <button type="button" aria-pressed="true" className="h-6 w-[22px] rounded bg-[#d5d1cd] text-xs font-bold text-[#444]">B</button>
      <button type="button" className="h-6 w-[22px] font-['Liberation_Serif',serif] text-sm italic text-[#444]">I</button>
      <button type="button" className="flex h-6 w-[29px] items-center gap-1.5 pl-1.5 text-xs text-[#444]">
        <span className="border-b border-[#1e8bcd] leading-3">U</span>
        <Caret />
      </button>
      <span className="flex h-5 w-1.5 shrink-0 justify-center"><span className="w-px bg-[#e3e1df]" /></span>
      <Tools items={formattingBar} />
    </div>

    <div className="flex min-h-0 flex-1">
      <main className="flex min-w-0 flex-1 flex-col">
        <FormulaBar />
        <div className="mt-0.5 flex min-h-0 flex-1">
          <div className="min-w-0 flex-1 overflow-hidden">
            <Sheet />
          </div>
          <div className="w-[9px] shrink-0 bg-[#cdcdcd] p-0.5 pr-px">
            <div className="h-[48%] rounded-full bg-[#7f8080]" />
          </div>
        </div>
        <div className="flex h-[9px] shrink-0">
          <div className="flex min-w-0 flex-1 items-center justify-between bg-[#cdcdcd] pl-0.5 pr-px">
            <div className="h-1.5 w-7/15 rounded-full bg-[#7f8080]" />
            <div className="h-1.5 w-0.5 bg-[#555]" />
          </div>
          <div className="w-[9px]" />
        </div>
        <TabBar />
      </main>

      <aside className="relative flex w-[39px] shrink-0 flex-col items-center border-l border-[#cdc9c5]">
        <span className="absolute -left-px top-[269px] h-[50px] w-1 bg-[#8f8f8f]" />
        <button type="button" aria-label="Sidebar settings" className="flex h-7 items-center">
          <svg viewBox="0 0 10 10" className="size-2.5" stroke="#333" strokeWidth="1.500" aria-hidden="true"><path d="M0 1.500h10M0 5h10M0 8.500h10" /></svg>
        </button>
        <div className="mt-[5px] flex flex-col gap-[5px]">
          {sidebarItems.map((s) => (
            <button key={s.icon} type="button" aria-label={s.label} className="flex h-6 items-center">
              <Icon>{icons[s.icon]}</Icon>
            </button>
          ))}
        </div>
      </aside>
    </div>

    <StatusBar />
  </div>
);

export default App;
